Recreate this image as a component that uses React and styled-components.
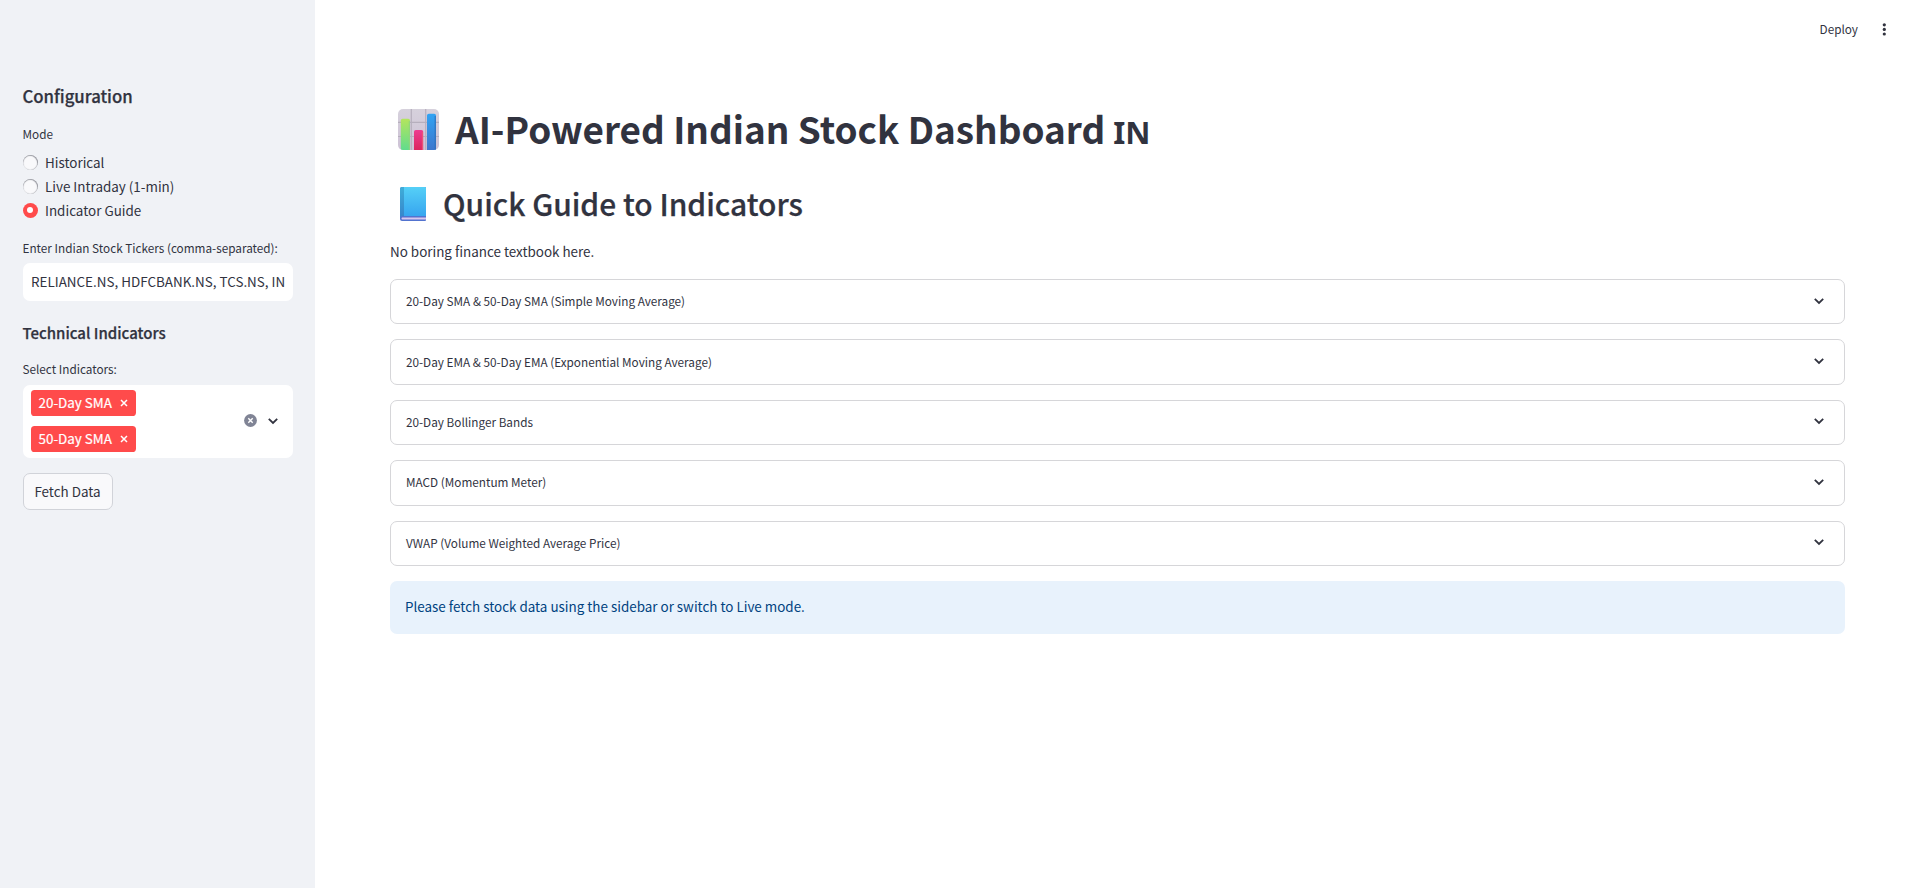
import React from 'react';
import styled, { createGlobalStyle } from 'styled-components';

const GlobalStyle = createGlobalStyle`
  *, *::before, *::after { box-sizing: border-box; }
  body {
    margin: 0;
    background: #fff;
    color: #31333f;
    font-family: "Noto Sans CJK SC", "Noto Sans", sans-serif;
    font-size: 13.43px;
    line-height: 23px;
  }
  h1, h2, h3, p { margin: 0; }
`;

const Page = styled.div`
  display: flex;
  height: 888px;
  overflow: hidden;
`;

const Sidebar = styled.aside`
  width: 315px;
  flex: none;
  padding: 84px 22.5px 0 22.5px;
  background: #f0f2f6;
`;

const SideHeading = styled.h3`
  margin-top: ${(p) => p.$top || 0}px;
  font-size: ${(p) => p.$size}px;
  font-weight: 500;
  line-height: 24px;
  white-space: nowrap;
  -webkit-text-stroke: 0.25px currentColor;
`;

const FieldLabel = styled.div`
  margin-top: ${(p) => p.$top}px;
  font-size: 11.75px;
  line-height: 20px;
  white-space: nowrap;
`;

const RadioGroup = styled.div`
  display: flex;
  flex-direction: column;
  margin-top: 6.4px;
`;

const RadioRow = styled.label`
  display: flex;
  align-items: center;
  gap: 7.5px;
  height: 24px;
`;

const RadioDot = styled.span`
  display: flex;
  align-items: center;
  justify-content: center;
  width: 15px;
  height: 15px;
  border-radius: 50%;
  background: ${(p) => (p.$on ? '#ff4b4b' : '#f9f9fb')};
  box-shadow: ${(p) => (p.$on ? 'none' : 'inset -0.3px 0.4px 1px 0.4px #8a8c94')};
  &::after {
    content: '';
    width: 6px;
    height: 6px;
    border-radius: 50%;
    background: ${(p) => (p.$on ? '#fff' : 'transparent')};
  }
`;

const TextInput = styled.div`
  height: 38px;
  margin-top: 5px;
  padding: 0 8.5px;
  border-radius: 7px;
  background: #fff;
  line-height: 37px;
  white-space: nowrap;
  overflow: hidden;
`;

const MultiSelect = styled.div`
  display: flex;
  align-items: center;
  height: 73px;
  margin-top: 6px;
  padding: 0 13px 1px 8.5px;
  border-radius: 7px;
  background: #fff;
`;

const Tags = styled.div`
  display: flex;
  flex-direction: column;
  align-items: flex-start;
  gap: 10px;
  flex: 1;
`;

const Tag = styled.span`
  display: flex;
  align-items: center;
  justify-content: space-between;
  width: 105px;
  height: 26px;
  padding: 0 8px 0 7.5px;
  border-radius: 3.6px;
  background: #ff4b4b;
  color: #fff;
  line-height: 24px;
  white-space: nowrap;
  -webkit-text-stroke: 0.2px currentColor;
`;

const TagText = styled.span`
  padding-bottom: 2px;
`;

const SelectActions = styled.div`
  display: flex;
  align-items: center;
  gap: 9px;
`;

const Button = styled.button`
  display: block;
  width: 90px;
  height: 37px;
  margin-top: 15px;
  padding: 0;
  border: 1px solid #d1d3d9;
  border-radius: 7px;
  background: #f9f9fb;
  color: inherit;
  font: inherit;
`;

const Main = styled.main`
  flex: 1;
  min-width: 0;
`;

const Toolbar = styled.header`
  display: flex;
  justify-content: flex-end;
  align-items: center;
  gap: 19px;
  height: 59px;
  padding-right: 25px;
  font-size: 11.75px;
`;

const SmallText = styled.span`
  padding-bottom: 2px;
`;

const Content = styled.div`
  display: flex;
  flex-direction: column;
  padding: 0 72px 0 75px;
`;

const Title = styled.h1`
  display: flex;
  align-items: center;
  height: 48px;
  margin-top: 45px;
  padding-left: 8px;
  font-size: 36.9px;
  font-weight: 700;
  line-height: 48px;
  white-space: nowrap;
  svg { margin: 3px 16px 0 0; flex: none; }
`;

const CountryCode = styled.span`
  margin: 8px 0 0 8px;
  font-family: "Noto Sans", "Open Sans", sans-serif;
  font-size: 31px;
  line-height: 40px;
`;

const Subtitle = styled.h2`
  display: flex;
  align-items: center;
  height: 40px;
  margin-top: 31px;
  padding-left: 10px;
  font-size: 29.95px;
  font-weight: 500;
  line-height: 40px;
  white-space: nowrap;
  -webkit-text-stroke: 0.25px currentColor;
  svg { margin: 1px 17px 0 0; flex: none; }
`;

const Intro = styled.p`
  margin-top: 17px;
`;

const ExpanderList = styled.div`
  display: flex;
  flex-direction: column;
  gap: 15px;
  margin-top: 16px;
`;

const Expander = styled.div`
  display: flex;
  align-items: center;
  justify-content: space-between;
  height: 45.4px;
  padding: 0 18px 0 15px;
  border: 1px solid #d6d6d9;
  border-radius: 7px;
  font-size: 11.75px;
  white-space: nowrap;
  svg { margin-bottom: 2px; }
`;

const Info = styled.div`
  height: 53px;
  margin-top: 15px;
  padding: 0 15px;
  border-radius: 7px;
  background: #e8f2fc;
  color: #004280;
  line-height: 50px;
`;

const Chevron = ({ size = 14 }) => (
  <svg width={size} height={size} viewBox="0 0 14 14" fill="none" stroke="#31333f" strokeWidth="1.8">
    <path d="M2.800 4.900 7 9l4.200-4.100" />
  </svg>
);

const Cross = () => (
  <svg width="8" height="8" viewBox="0 0 8 8" stroke="#fff" strokeWidth="1.5">
    <path d="M1 1l6 6M7 1 1 7" />
  </svg>
);

const ClearIcon = () => (
  <svg width="13" height="13" viewBox="0 0 13 13">
    <circle cx="6.5" cy="6.5" r="6.4" fill="#808495" />
    <path d="M4.3 4.3l4.4 4.4M8.7 4.3 4.3 8.7" stroke="#fff" strokeWidth="1.4" />
  </svg>
);

const MoreIcon = () => (
  <svg width="15" height="15" viewBox="0 0 15 15" fill="#31333f">
    <circle cx="7.3" cy="2.8" r="1.6" />
    <circle cx="7.3" cy="7.4" r="1.6" />
    <circle cx="7.3" cy="12" r="1.6" />
  </svg>
);

const ChartEmoji = () => (
  <svg width="41" height="41" viewBox="0 0 41 41">
    <defs>
      <linearGradient id="bg" x1="0" y1="0" x2="0" y2="1">
        <stop offset="0" stopColor="#d6d1dc" /><stop offset="1" stopColor="#cec2d6" />
      </linearGradient>
      <linearGradient id="green" x1="0" y1="0" x2="0" y2="1">
        <stop offset="0" stopColor="#b4e55d" /><stop offset="1" stopColor="#61dc8d" />
      </linearGradient>
      <linearGradient id="pink" x1="0" y1="0" x2="0" y2="1">
        <stop offset="0" stopColor="#ed3c91" /><stop offset="1" stopColor="#dc245e" />
      </linearGradient>
      <linearGradient id="blue" x1="0" y1="0" x2="0" y2="1">
        <stop offset="0" stopColor="#31a3f3" /><stop offset="1" stopColor="#3e76cd" />
      </linearGradient>
      <clipPath id="tile"><rect width="41" height="41" rx="5" /></clipPath>
    </defs>
    <g clipPath="url(#tile)">
      <rect width="41" height="41" fill="url(#bg)" />
      <path d="M13.3 0v41M27.7 0v41M0 13.3h41M0 27.5h41" stroke="#b6afbd" strokeWidth="1.2" />
      <path d="M2.8 41V11.500q0-1.800 1.800-1.800h5.600q1.800 0 1.800 1.800V41z" fill="url(#green)" />
      <path d="M16 41V22.800q0-1.800 1.800-1.800h5.600q1.800 0 1.800 1.800V41z" fill="url(#pink)" />
      <path d="M29 41V6.600q0-1.800 1.800-1.800h5.400q1.800 0 1.800 1.800V41z" fill="url(#blue)" />
      <path d="M11.300 12v29" stroke="#8fd67c" strokeWidth="1" />
      <path d="M24.400 23v18" stroke="#ee5576" strokeWidth="1" />
      <path d="M37.200 7v34" stroke="#2e6fb8" strokeWidth="1" />
    </g>
  </svg>
);

const BookEmoji = () => (
  <svg width="26" height="34" viewBox="0 0 26 34">
    <defs>
      <linearGradient id="cover" x1="0" y1="0" x2="0" y2="1">
        <stop offset="0" stopColor="#55d0f7" /><stop offset="1" stopColor="#37a5ef" />
      </linearGradient>
      <linearGradient id="spine" x1="0" y1="0" x2="0" y2="1">
        <stop offset="0" stopColor="#3eaed9" /><stop offset="1" stopColor="#3784ca" />
      </linearGradient>
    </defs>
    <path d="M0 2Q0 0 2 0h23q1 0 1 1v32q0 1-1 1H2q-2 0-2-2z" fill="#5273cf" />
    <path d="M2 30.500h24v2H2q-1.300-1 0-2z" fill="#d9c6ee" />
    <path d="M3.500 0H25q1 0 1 1v28H3.500z" fill="url(#cover)" />
    <path d="M0 2Q0 0 2 0h2v29H2q-1.300 0-2 1.500z" fill="url(#spine)" />
  </svg>
);

const modes = ['Historical', 'Live Intraday (1-min)', 'Indicator Guide'];
const indicators = ['20-Day SMA', '50-Day SMA'];
const guides = [
  '20-Day SMA & 50-Day SMA (Simple Moving Average)',
  '20-Day EMA & 50-Day EMA (Exponential Moving Average)',
  '20-Day Bollinger Bands',
  'MACD (Momentum Meter)',
  'VWAP (Volume Weighted Average Price)',
];

export default function App() {
  return (
    <>
      <GlobalStyle />
      <Page>
        <Sidebar>
          <SideHeading $size={16.75}>Configuration</SideHeading>
          <FieldLabel $top={16}>Mode</FieldLabel>
          <RadioGroup>
            {modes.map((mode) => (
              <RadioRow key={mode}>
                <RadioDot $on={mode === 'Indicator Guide'} />
                {mode}
              </RadioRow>
            ))}
          </RadioGroup>
          <FieldLabel $top={15.6}>Enter Indian Stock Tickers (comma-separated):</FieldLabel>
          <TextInput>RELIANCE.NS, HDFCBANK.NS, TCS.NS, IN</TextInput>
          <SideHeading $size={15} $top={20}>Technical Indicators</SideHeading>
          <FieldLabel $top={14}>Select Indicators:</FieldLabel>
          <MultiSelect>
            <Tags>
              {indicators.map((name) => (
                <Tag key={name}><TagText>{name}</TagText><Cross /></Tag>
              ))}
            </Tags>
            <SelectActions><ClearIcon /><Chevron /></SelectActions>
          </MultiSelect>
          <Button>Fetch Data</Button>
        </Sidebar>
        <Main>
          <Toolbar><SmallText>Deploy</SmallText><MoreIcon /></Toolbar>
          <Content>
            <Title><ChartEmoji />AI-Powered Indian Stock Dashboard<CountryCode>IN</CountryCode></Title>
            <Subtitle><BookEmoji />Quick Guide to Indicators</Subtitle>
            <Intro>No boring finance textbook here.</Intro>
            <ExpanderList>
              {guides.map((guide) => (
                <Expander key={guide}><SmallText>{guide}</SmallText><Chevron /></Expander>
              ))}
            </ExpanderList>
            <Info>Please fetch stock data using the sidebar or switch to Live mode.</Info>
          </Content>
        </Main>
      </Page>
    </>
  );
}
